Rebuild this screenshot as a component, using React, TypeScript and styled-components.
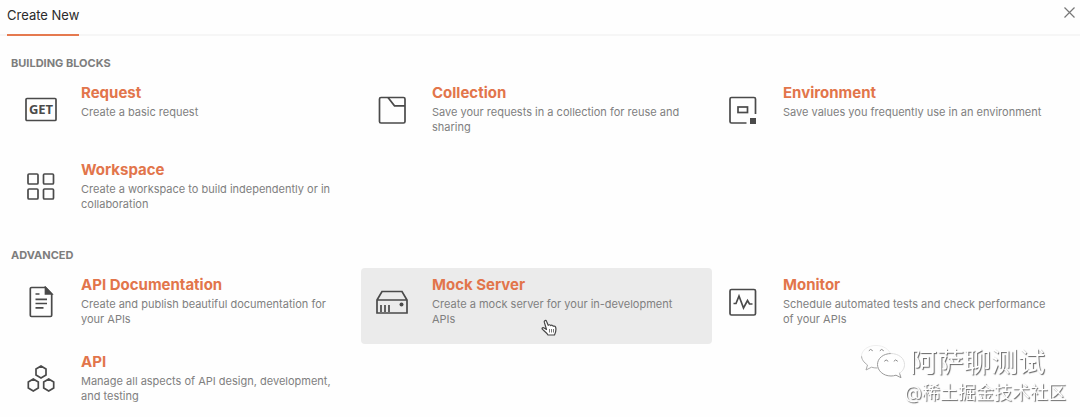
import React from 'react';
import styled, { createGlobalStyle } from 'styled-components';

const GlobalStyle = createGlobalStyle`
  * { box-sizing: border-box; }
  body {
    margin: 0;
    background: #fefefe;
    font-family: Inter, "Noto Sans CJK SC", sans-serif;
  }
  button {
    margin: 0;
    border: 0;
    background: none;
    font-family: inherit;
    cursor: pointer;
  }
`;

const Page = styled.main`
  position: relative;
`;

const Header = styled.header`
  display: flex;
  justify-content: space-between;
  align-items: flex-start;
  height: 36px;
  padding: 0 4px 0 7px;
  box-shadow: inset 0 -2px 0 #f6f6f6;
`;

const Tab = styled.button`
  height: 36px;
  padding: 0 0 5px;
  border-bottom: 2px solid #e5794f;
  color: #2b2b2b;
  font-size: 13px;
  line-height: 20px;
`;

const CloseButton = styled.button`
  display: flex;
  padding: 6px 0;
  color: #777;
`;

const Section = styled.section`
  padding: 19px 17px 0 10px;

  & + & { padding-top: 18px; }
`;

const SectionTitle = styled.h2`
  margin: 0 0 5px;
  padding-left: 1px;
  color: #7d7d7d;
  font-size: 11px;
  font-weight: 700;
  line-height: 16px;
  text-transform: uppercase;
`;

const Grid = styled.div`
  display: grid;
  grid-template-columns: repeat(3, minmax(0, 1fr));
  row-gap: 1px;
`;

const Card = styled.button<{ $active?: boolean }>`
  display: flex;
  align-items: flex-start;
  min-height: 76px;
  padding: 7px 6px 7px 0;
  border-radius: 4px;
  background: ${({ $active }) => ($active ? '#ebebeb' : 'transparent')};
  text-align: left;
`;

const IconBox = styled.span`
  display: flex;
  flex: 0 0 71px;
  padding: 11px 0 0 15px;
`;

const CardText = styled.span`
  display: flex;
  flex-direction: column;
  gap: 2px;
  min-width: 0;
`;

const CardTitle = styled.span`
  color: #e2754b;
  font-size: 15px;
  font-weight: 700;
  line-height: 20px;
`;

const CardDescription = styled.span`
  color: #808080;
  font-size: 11px;
  line-height: 15px;
  white-space: pre-line;
`;

const Watermark = styled.div`
  position: fixed;
  right: 14px;
  bottom: 13px;
  display: flex;
  flex-direction: column;
  align-items: flex-end;
  color: #fff;
  text-shadow: 1px 1px 1px #666;
  pointer-events: none;
`;

const WatermarkAccount = styled.div`
  display: flex;
  align-items: center;
  gap: 4px;
  padding-right: 21px;
  font-size: 27px;
  line-height: 26px;
`;

const WatermarkSource = styled.div`
  font-size: 18px;
  line-height: 22px;
`;

const Pointer = styled.svg`
  position: absolute;
  left: 541px;
  top: 319px;
  pointer-events: none;
`;

const GetLabel = styled.text`
  font-family: "Open Sans", sans-serif;
  font-size: 13px;
  font-weight: 700;
`;

type IconName = 'request' | 'collection' | 'environment' | 'workspace' | 'docs' | 'server' | 'monitor' | 'api';

const hexagon = (x: number, y: number) =>
  `M${x} ${y - 6}l5 3v6l-5 3l-5-3v-6z`;

const drawings: Record<IconName, React.ReactNode> = {
  request: (
    <>
      <rect x="1" y="4.500" width="30" height="22" rx="1" />
      <GetLabel x="16" y="20" textAnchor="middle" fill="#4a4a4a" stroke="none">GET</GetLabel>
    </>
  ),
  collection: (
    <>
      <rect x="3.500" y="3.500" width="25.500" height="25.500" rx="1.500" />
      <path d="M12 3.500l6.500 8.300H29" />
    </>
  ),
  environment: (
    <>
      <path d="M28.500 20V5A1.500 1.500 0 0 0 27 3.500H4.500A1.500 1.500 0 0 0 3 5v22.500A1.500 1.500 0 0 0 4.500 29H19.500" />
      <rect x="11" y="13" width="9.500" height="5.500" />
      <rect x="23" y="24" width="6" height="6" fill="#4a4a4a" stroke="none" />
    </>
  ),
  workspace: (
    <>
      <rect x="3" y="3" width="10" height="10" rx="1" />
      <rect x="18.500" y="3" width="10" height="10" rx="1" />
      <rect x="3" y="18" width="10" height="10" rx="1" />
      <rect x="18.500" y="18" width="10" height="10" rx="1" />
    </>
  ),
  docs: (
    <>
      <path d="M20.500 1.500H6.500A1.200 1.200 0 0 0 5.300 2.700V29.300a1.200 1.200 0 0 0 1.200 1.200H25.500a1.200 1.200 0 0 0 1.200-1.200V8z" />
      <path d="M20.500 1.500V8h6.200z" fill="#4a4a4a" />
      <path d="M10.500 8h4M10.500 13.300h11.500M10.500 17.500h11.500M10.500 21.800h8" />
    </>
  ),
  server: (
    <>
      <path d="M1 14L6 5.500H26L31 14V27H1zM1 14H31M5 26v-7M9 26v-7M13 26v-7" />
      <circle cx="25.500" cy="18.500" r="2" fill="#4a4a4a" stroke="none" />
    </>
  ),
  monitor: (
    <>
      <rect x="3" y="3.500" width="25.500" height="25.500" rx="1.500" />
      <path d="M6.500 17.500h2.500l3-7.500 4.500 12 4-7.500 2 3.500h3" />
    </>
  ),
  api: (
    <path d={[hexagon(16, 9), hexagon(8.300, 22), hexagon(23.700, 22)].join('')} />
  ),
};

function Icon({ name }: { name: IconName }) {
  return (
    <svg width="32" height="32" viewBox="0 0 32 32" fill="none" stroke="#4a4a4a" strokeWidth="1.700" aria-hidden="true">
      {drawings[name]}
    </svg>
  );
}

interface Item {
  icon: IconName;
  title: string;
  description: string;
  active?: boolean;
}

const sections: { title: string; items: Item[] }[] = [
  {
    title: 'Building blocks',
    items: [
      { icon: 'request', title: 'Request', description: 'Create a basic request' },
      { icon: 'collection', title: 'Collection', description: 'Save your requests in a collection for reuse and\nsharing' },
      { icon: 'environment', title: 'Environment', description: 'Save values you frequently use in an environment' },
      { icon: 'workspace', title: 'Workspace', description: 'Create a workspace to build independently or in\ncollaboration' },
    ],
  },
  {
    title: 'Advanced',
    items: [
      { icon: 'docs', title: 'API Documentation', description: 'Create and publish beautiful documentation for\nyour APIs' },
      { icon: 'server', title: 'Mock Server', description: 'Create a mock server for your in-development\nAPIs', active: true },
      { icon: 'monitor', title: 'Monitor', description: 'Schedule automated tests and check performance\nof your APIs' },
      { icon: 'api', title: 'API', description: 'Manage all aspects of API design, development,\nand testing' },
    ],
  },
];

function WechatLogo() {
  return (
    <svg width="46" height="38" viewBox="0 0 46 38" fill="none" aria-hidden="true">
      <g stroke="#aaa" strokeWidth="1" strokeLinecap="round">
        <path d="M17 24c-2 0-4-.2-5.500-.8L6 26l1.500-5C4 18.500 1.500 15.500 1.500 12" />
        <path d="M1.500 12C1.500 6 8 1.500 16 1.500S29.500 6 30.500 10" stroke="#eee" />
        <path d="M9 6.500q1.500-2.500 3.500 0M20 6.500q1.500-2.500 3.500 0" stroke="#888" />
        <path d="M31 9.500C23 9.500 17.500 14.500 17.500 20.500S23 32 31 32q2.500 0 5-.8l5 2.500-1.500-4.500" fill="#fff" stroke="#999" />
        <path d="M39.500 29.200C43 27 44.500 24 44.500 20.500 44.500 14.500 39 9.500 31 9.500" stroke="#ddd" />
        <path d="M24.500 17q1.500-2.500 3.500 0M34 17q1.500-2.500 3.500 0" stroke="#888" />
      </g>
    </svg>
  );
}

export default function App() {
  return (
    <Page>
      <GlobalStyle />
      <Header>
        <div role="tablist">
          <Tab type="button" role="tab" aria-selected="true">Create New</Tab>
        </div>
        <CloseButton type="button" aria-label="Close">
          <svg width="13" height="13" viewBox="0 0 13 13" stroke="currentColor" strokeWidth="1.200" fill="none">
            <path d="M1.500 1.500l10 10M11.500 1.500l-10 10" />
          </svg>
        </CloseButton>
      </Header>
      {sections.map((section) => (
        <Section key={section.title}>
          <SectionTitle>{section.title}</SectionTitle>
          <Grid>
            {section.items.map((item) => (
              <Card key={item.title} type="button" $active={item.active}>
                <IconBox><Icon name={item.icon} /></IconBox>
                <CardText>
                  <CardTitle>{item.title}</CardTitle>
                  <CardDescription>{item.description}</CardDescription>
                </CardText>
              </Card>
            ))}
          </Grid>
        </Section>
      ))}
      <Pointer width="16" height="18" viewBox="0 0 16 18" aria-hidden="true">
        <path
          d="M5.500 10.500L3.300 3.200C2.900 1.500 5 .8 5.600 2.400L7.200 6.300C8 5.400 9.300 5.700 9.700 6.600 10.500 5.900 11.800 6.200 12.200 7.200 13.500 6.700 14.600 7.400 14.800 8.800 15.200 11.500 15 13 13.500 16H7C5.500 13.500 3 12 1.300 10.200.6 9 2 8 3.200 8.900z"
          fill="#fff" stroke="#444" strokeWidth="1.200" strokeLinejoin="round"
        />
        <path d="M8.500 10v3.500M10.500 10v3.500M12.500 10v3.500" stroke="#777" strokeWidth="1" />
      </Pointer>
      <Watermark>
        <WatermarkAccount><WechatLogo />阿萨聊测试</WatermarkAccount>
        <WatermarkSource>@稀土掘金技术社区</WatermarkSource>
      </Watermark>
    </Page>
  );
}
